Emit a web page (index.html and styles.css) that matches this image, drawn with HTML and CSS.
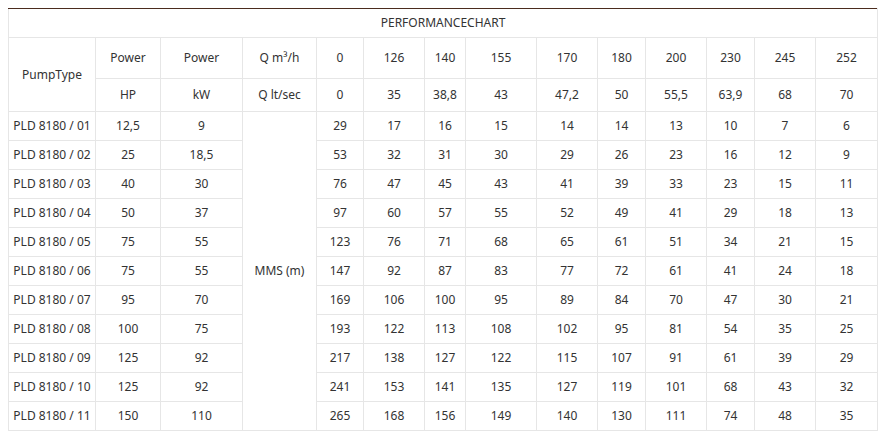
FILE: index.html
```html
<!DOCTYPE html>
<html>
<head>
<meta charset="utf-8">
<link rel="stylesheet" href="styles.css">
</head>
<body>
<table class="chart">
<colgroup>
<col class="c1"><col class="c2"><col class="c3"><col class="c4"><col class="c5"><col class="c6"><col class="c7"><col class="c8"><col class="c9"><col class="c10"><col class="c11"><col class="c12"><col class="c13"><col class="c14">
</colgroup>
<tr class="title"><td colspan="14">PERFORMANCECHART</td></tr>
<tr class="h1"><td rowspan="2">PumpType</td><td>Power</td><td>Power</td><td>Q m³/h</td><td>0</td><td>126</td><td>140</td><td>155</td><td>170</td><td>180</td><td>200</td><td>230</td><td>245</td><td>252</td></tr>
<tr class="h2"><td>HP</td><td>kW</td><td>Q lt/sec</td><td>0</td><td>35</td><td>38,8</td><td>43</td><td>47,2</td><td>50</td><td>55,5</td><td>63,9</td><td>68</td><td>70</td></tr>
<tr class="row"><td>PLD 8180 / 01</td><td>12,5</td><td>9</td><td rowspan="11">MMS (m)</td><td>29</td><td>17</td><td>16</td><td>15</td><td>14</td><td>14</td><td>13</td><td>10</td><td>7</td><td>6</td></tr>
<tr class="row"><td>PLD 8180 / 02</td><td>25</td><td>18,5</td><td>53</td><td>32</td><td>31</td><td>30</td><td>29</td><td>26</td><td>23</td><td>16</td><td>12</td><td>9</td></tr>
<tr class="row"><td>PLD 8180 / 03</td><td>40</td><td>30</td><td>76</td><td>47</td><td>45</td><td>43</td><td>41</td><td>39</td><td>33</td><td>23</td><td>15</td><td>11</td></tr>
<tr class="row"><td>PLD 8180 / 04</td><td>50</td><td>37</td><td>97</td><td>60</td><td>57</td><td>55</td><td>52</td><td>49</td><td>41</td><td>29</td><td>18</td><td>13</td></tr>
<tr class="row"><td>PLD 8180 / 05</td><td>75</td><td>55</td><td>123</td><td>76</td><td>71</td><td>68</td><td>65</td><td>61</td><td>51</td><td>34</td><td>21</td><td>15</td></tr>
<tr class="row"><td>PLD 8180 / 06</td><td>75</td><td>55</td><td>147</td><td>92</td><td>87</td><td>83</td><td>77</td><td>72</td><td>61</td><td>41</td><td>24</td><td>18</td></tr>
<tr class="row"><td>PLD 8180 / 07</td><td>95</td><td>70</td><td>169</td><td>106</td><td>100</td><td>95</td><td>89</td><td>84</td><td>70</td><td>47</td><td>30</td><td>21</td></tr>
<tr class="row"><td>PLD 8180 / 08</td><td>100</td><td>75</td><td>193</td><td>122</td><td>113</td><td>108</td><td>102</td><td>95</td><td>81</td><td>54</td><td>35</td><td>25</td></tr>
<tr class="row"><td>PLD 8180 / 09</td><td>125</td><td>92</td><td>217</td><td>138</td><td>127</td><td>122</td><td>115</td><td>107</td><td>91</td><td>61</td><td>39</td><td>29</td></tr>
<tr class="row"><td>PLD 8180 / 10</td><td>125</td><td>92</td><td>241</td><td>153</td><td>141</td><td>135</td><td>127</td><td>119</td><td>101</td><td>68</td><td>43</td><td>32</td></tr>
<tr class="row"><td>PLD 8180 / 11</td><td>150</td><td>110</td><td>265</td><td>168</td><td>156</td><td>149</td><td>140</td><td>130</td><td>111</td><td>74</td><td>48</td><td>35</td></tr>
</table>
</body>
</html>
```
FILE: styles.css
```css
html, body {
  margin: 0;
  padding: 0;
  background: #ffffff;
}
body {
  padding: 8px;
  font-family: "Noto Sans", "DejaVu Sans", sans-serif;
  font-size: 12px;
  color: #333333;
}
.chart {
  border-collapse: collapse;
  table-layout: fixed;
  width: 869px;
  border-top: 1px solid #4b2c1e;
}
.chart td {
  border: 1px solid #e6e6e6;
  padding: 0;
  text-align: center;
  vertical-align: middle;
  line-height: 16px;
  white-space: nowrap;
}
.chart .title td {
  border-top: 1px solid #4b2c1e;
}
.title { height: 29px; }
.h1 { height: 41px; }
.h2 { height: 33px; }
.row { height: 29px; }
.c1 { width: 87px; }
.c2 { width: 65px; }
.c3 { width: 82px; }
.c4 { width: 74px; }
.c5 { width: 47px; }
.c6 { width: 61px; }
.c7 { width: 41px; }
.c8 { width: 71px; }
.c9 { width: 61px; }
.c10 { width: 48px; }
.c11 { width: 61px; }
.c12 { width: 48px; }
.c13 { width: 61px; }
.c14 { width: 62px; }
```
